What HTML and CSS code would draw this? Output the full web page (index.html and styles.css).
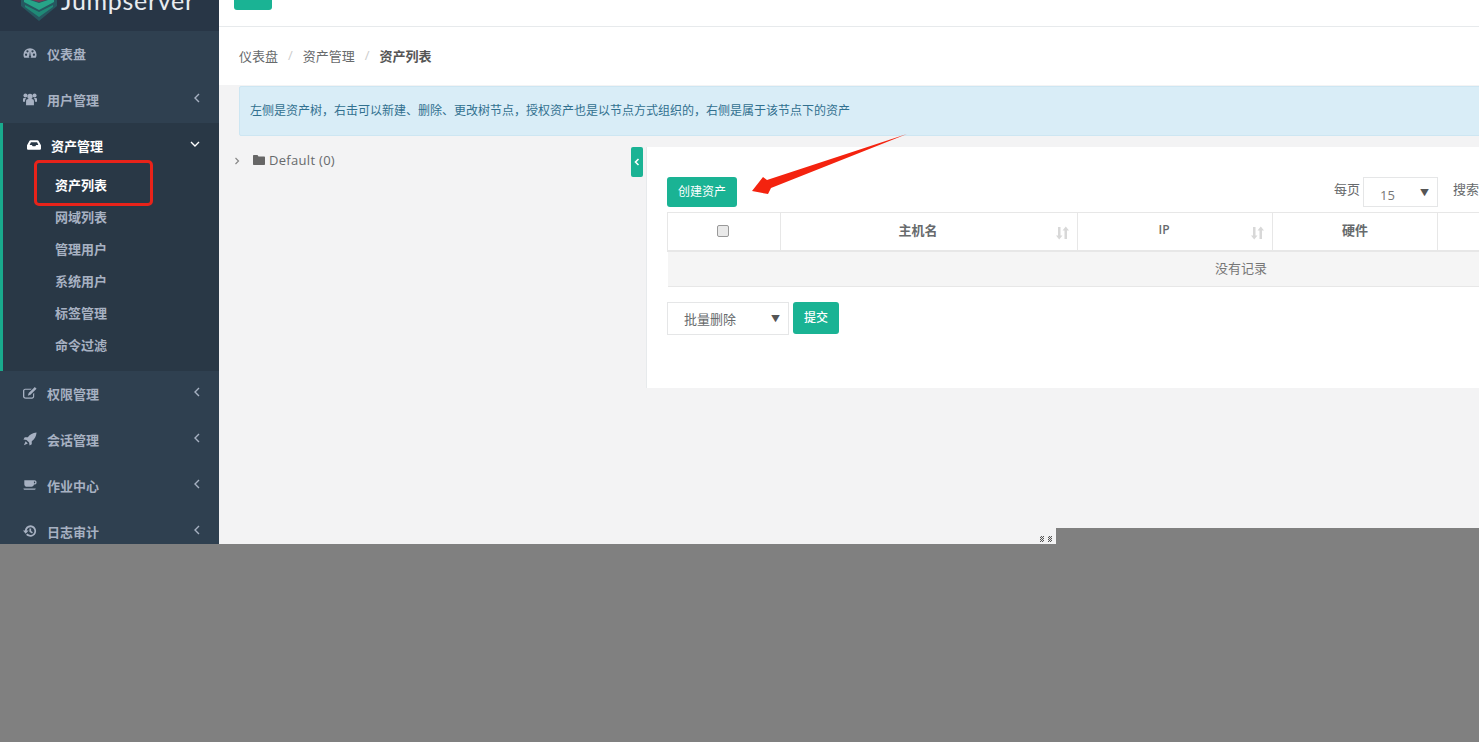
FILE: index.html
```html
<!DOCTYPE html>
<html lang="en">
<head>
    <meta charset="UTF-8">
    <title>资产列表</title>
    <link rel="stylesheet" href="styles.css">
</head>
<body>
    <div class="screen">
        <div class="page">
            <aside class="sidebar">
                <div class="logo">
                    <svg class="logo-mark" viewBox="0 0 38 40">
                        <path d="M19 0 L37 10 V25 L19 40 L1 25 V10 Z" fill="#265860"/>
                        <path d="M19 12 L30 18 L19 21 L8 18 Z" fill="#7a3a52"/>
                        <path d="M4 17 L19 22 L34 17 V21 L19 29 L4 21 Z" fill="#27a488"/>
                        <path d="M5 24 L19 31 L33 24 V26 L19 36 L5 26 Z" fill="#1f8a76"/>
                    </svg>
                    <span class="logo-text">Jumpserver</span>
                </div>
                <nav class="nav">
                    <a class="nav-item">
                        <svg class="nav-icon" viewBox="0 0 16 16"><path d="M8 2.500A7.500 7.500 0 0 0 .5 10c0 1.400.4 2.600 1 3.500h13c.6-.9 1-2.100 1-3.500A7.500 7.500 0 0 0 8 2.500Zm-4.500 8.800a1.300 1.300 0 1 1 0-2.600 1.300 1.300 0 0 1 0 2.600Zm1.600-3.900a1.300 1.300 0 1 1 0-2.600 1.300 1.300 0 0 1 0 2.600ZM8.900 11.500a1.300 1.300 0 1 1-1.800 0l.9-5.500Zm2-4.100a1.300 1.300 0 1 1 0-2.600 1.300 1.300 0 0 1 0 2.600Zm1.600 3.900a1.300 1.300 0 1 1 0-2.600 1.300 1.300 0 0 1 0 2.600Z" fill-rule="evenodd"/></svg>
                        <span>仪表盘</span>
                    </a>
                    <a class="nav-item">
                        <svg class="nav-icon" viewBox="0 0 16 16"><circle cx="8" cy="5" r="3"/><circle cx="2.800" cy="4" r="2.300"/><circle cx="13.200" cy="4" r="2.300"/><path d="M3.500 15V10.500C3.500 9 4.500 8 6 8h4c1.500 0 2.500 1 2.500 2.500V15ZM0 11V8.500C0 7.300.6 6.800 1.500 6.800h2.300c-.8.800-1.500 1.900-1.500 4.200ZM16 11V8.500C16 7.300 15.400 6.800 14.500 6.800h-2.300c.8.800 1.500 1.900 1.500 4.200Z"/></svg>
                        <span>用户管理</span>
                        <svg class="chevron" viewBox="0 0 8 10"><path d="M6 1 L2 5 L6 9"/></svg>
                    </a>
                    <div class="nav-group">
                        <a class="nav-item active">
                            <svg class="nav-icon" viewBox="0 0 16 16"><path d="M4 2.500h8c.5 0 .9.300 1.100.7L15.800 8c.1.300.2.500.2.800v3.200c0 .9-.7 1.500-1.500 1.500h-13C.7 13.500 0 12.900 0 12V8.800c0-.3.100-.5.200-.8L2.900 3.200c.2-.4.600-.7 1.100-.7ZM4.500 4.800 3 8h2.500l1 1.500h3l1-1.500H13l-1.500-3.200Z" fill-rule="evenodd"/></svg>
                            <span>资产管理</span>
                            <svg class="chevron" viewBox="0 0 10 8"><path d="M1 2 L5 6 L9 2"/></svg>
                        </a>
                        <a class="sub-item current">资产列表</a>
                        <a class="sub-item">网域列表</a>
                        <a class="sub-item">管理用户</a>
                        <a class="sub-item">系统用户</a>
                        <a class="sub-item">标签管理</a>
                        <a class="sub-item">命令过滤</a>
                    </div>
                    <a class="nav-item">
                        <svg class="nav-icon" viewBox="0 0 16 16"><path d="M2.500 3H10L8.700 4.300H2.700c-.7 0-1.200.5-1.200 1.200v6.300c0 .7.500 1.200 1.200 1.200h7.600c.7 0 1.200-.5 1.200-1.200V9l1.300-1.300v4.300c0 1.400-1.100 2.500-2.500 2.500h-7C1.100 14.500 0 13.400 0 12V5.500C0 4.100 1.100 3 2.500 3ZM13.500 1 15.500 3 8.500 10 5.500 11 6.500 8Z"/></svg>
                        <span>权限管理</span>
                        <svg class="chevron" viewBox="0 0 8 10"><path d="M6 1 L2 5 L6 9"/></svg>
                    </a>
                    <a class="nav-item">
                        <svg class="nav-icon" viewBox="0 0 16 16"><path d="M15.500 .5C11 1 8 2.500 5.500 6H2L.5 8.500 4 9 7 12l.5 3.500L10 14v-3.500C13.500 8 15 5 15.500 .5ZM3 10.500 1 15l4.500-2Z"/></svg>
                        <span>会话管理</span>
                        <svg class="chevron" viewBox="0 0 8 10"><path d="M6 1 L2 5 L6 9"/></svg>
                    </a>
                    <a class="nav-item">
                        <svg class="nav-icon" viewBox="0 0 16 16"><path d="M1.500 2.500h11.500c1.500 0 2.500 1 2.500 2.500S14.500 7.500 13 7.500h-.5c-.3 1.500-1.300 2.500-2.800 2.500H4.500C2.800 10 1.500 8.500 1.500 7ZM12.500 4v2h.5c.6 0 1-.4 1-1s-.4-1-1-1ZM.5 12h14c0 1-.8 1.500-1.700 1.500H2.200C1.300 13.500.5 13 .5 12Z" fill-rule="evenodd"/></svg>
                        <span>作业中心</span>
                        <svg class="chevron" viewBox="0 0 8 10"><path d="M6 1 L2 5 L6 9"/></svg>
                    </a>
                    <a class="nav-item">
                        <svg class="nav-icon" viewBox="0 0 16 16"><path d="M8.500 1.500a6.500 6.500 0 1 1-5 10.700l1.600-1.400a4.400 4.400 0 1 0-.9-3.300H6.500L3 11 0 7.500h2.100A6.500 6.500 0 0 1 8.500 1.500Z"/><path d="M7.300 5h2v3l2 1.300-1 1.500-3-1.900Z"/></svg>
                        <span>日志审计</span>
                        <svg class="chevron" viewBox="0 0 8 10"><path d="M6 1 L2 5 L6 9"/></svg>
                    </a>
                </nav>
            </aside>

            <main class="main">
                <div class="topbar"><span class="top-btn"></span></div>
                <div class="breadcrumb">
                    <span>仪表盘</span><i>/</i><span>资产管理</span><i>/</i><strong>资产列表</strong>
                </div>
                <div class="content">
                    <div class="alert">左侧是资产树，右击可以新建、删除、更改树节点，授权资产也是以节点方式组织的，右侧是属于该节点下的资产</div>
                    <div class="columns">
                        <div class="tree">
                            <svg class="tree-caret" viewBox="0 0 6 8"><path d="M1.500 1 L4.500 4 L1.500 7"/></svg>
                            <svg class="tree-folder" viewBox="0 0 12 10"><path d="M1 0h3.500l1 1.500H11c.6 0 1 .4 1 1V9c0 .6-.4 1-1 1H1c-.6 0-1-.4-1-1V1c0-.6.4-1 1-1Z"/></svg>
                            <span>Default (0)</span>
                        </div>
                        <div class="toggle">
                            <svg viewBox="0 0 6 8"><path d="M4.500 1 L1.500 4 L4.500 7"/></svg>
                        </div>
                        <section class="card">
                            <div class="toolbar">
                                <a class="btn btn-create">创建资产</a>
                                <div class="filters">
                                    <label>每页</label>
                                    <div class="page-size"><span>15</span><em>▼</em></div>
                                    <label class="search-label">搜索</label>
                                    <div class="search-box"></div>
                                </div>
                            </div>
                            <table class="grid">
                                <thead>
                                    <tr>
                                        <th class="col-check"><input type="checkbox" class="check"></th>
                                        <th class="col-host sortable">主机名
                                            <svg class="sort" viewBox="0 0 13 14"><path d="M2 1h2.500v8.500H6.500L3.200 13.500 0 9.500h2ZM9.800 .5 13 4.500h-2V13H8.500V4.500h-2Z"/></svg>
                                        </th>
                                        <th class="col-ip sortable">IP
                                            <svg class="sort" viewBox="0 0 13 14"><path d="M2 1h2.500v8.500H6.500L3.200 13.500 0 9.500h2ZM9.800 .5 13 4.500h-2V13H8.500V4.500h-2Z"/></svg>
                                        </th>
                                        <th class="col-hw">硬件</th>
                                        <th></th>
                                    </tr>
                                </thead>
                                <tbody>
                                    <tr><td colspan="5">没有记录</td></tr>
                                </tbody>
                            </table>
                            <div class="bulk">
                                <div class="bulk-select"><span>批量删除</span><em>▼</em></div>
                                <a class="btn btn-submit">提交</a>
                            </div>
                        </section>
                    </div>
                </div>
            </main>
        </div>

        <!-- screenshot leftovers and annotations -->
        <div class="gray-patch"></div>
        <div class="resize-dots"><span></span><span></span></div>
        <div class="mark-box"></div>
        <svg class="mark-arrow" viewBox="0 0 1479 742">
            <polygon points="907,134 767,180 763,177 752,191 768,194 771,188" fill="#f4230f"/>
        </svg>
    </div>
</body>
</html>
```

FILE: styles.css
```css
* {
    box-sizing: border-box;
}

html, body {
    margin: 0;
    height: 100%;
    overflow: hidden;
}

body {
    font-family: "Open Sans", "Noto Sans CJK SC", sans-serif;
    font-size: 13px;
    color: #676a6c;
}

.screen {
    position: relative;
    width: 1479px;
    height: 742px;
    background: #808080;
    overflow: hidden;
}

.page {
    display: flex;
    height: 544px;
    overflow: hidden;
}

/* sidebar */
.sidebar {
    flex: 0 0 219px;
    background: #2f4050;
    overflow: hidden;
}

.logo {
    display: flex;
    align-items: flex-end;
    height: 31px;
    padding: 0 0 10px 20px;
    background: #283646;
    overflow: hidden;
}

.logo-mark {
    flex: none;
    width: 38px;
    height: 40px;
}

.logo-text {
    flex: none;
    margin: 0 0 6px 3px;
    font-family: "Lato", sans-serif;
    font-size: 25px;
    line-height: 30px;
    letter-spacing: 0.7px;
    color: #e8ecf0;
}

.nav-item {
    display: flex;
    align-items: center;
    gap: 10px;
    height: 46px;
    padding: 0 18px 2px 23px;
    color: #a7b1c2;
    font-weight: 600;
}

.nav-icon {
    flex: none;
    width: 14px;
    height: 14px;
    fill: currentColor;
}

.chevron {
    width: 8px;
    height: 10px;
    margin: -3px 0 0 auto;
    fill: none;
    stroke: currentColor;
    stroke-width: 1.400;
}

.nav-group {
    padding-bottom: 10px;
    background: #293846;
    border-left: 3px solid #19aa8d;
}

.nav-item.active {
    padding-left: 24px;
    color: #fff;
}

.nav-item.active .chevron {
    width: 10px;
    height: 8px;
    margin-right: 1px;
}

.sub-item {
    display: block;
    height: 32px;
    padding-left: 52px;
    line-height: 32px;
    color: #a7b1c2;
    font-weight: 600;
}

.sub-item.current {
    color: #fff;
}

/* main column */
.main {
    flex: 1;
    min-width: 0;
    background: #f3f3f4;
    overflow: hidden;
}

.topbar {
    height: 27px;
    background: #fff;
    border-bottom: 1px solid #e7eaec;
    padding-left: 15px;
}

.top-btn {
    display: block;
    width: 38px;
    height: 10px;
    background: #1ab394;
    border-radius: 0 0 3px 3px;
}

.breadcrumb {
    display: flex;
    align-items: center;
    height: 58px;
    padding: 0 0 2px 20px;
    background: #fff;
}

.breadcrumb i {
    margin: 0 10px;
    font-style: normal;
    color: #ccc;
}

.breadcrumb strong {
    font-weight: 600;
    color: #555;
}

.content {
    width: 1640px;
    padding: 1px 0 0 20px;
}

.alert {
    height: 50px;
    padding-left: 10px;
    line-height: 47px;
    font-size: 12px;
    color: #31708f;
    background: #d9edf7;
    border: 1px solid #cde6f2;
    border-radius: 2px;
}

.columns {
    display: flex;
    margin-top: 11px;
}

.tree {
    flex: 0 0 398px;
    display: flex;
    align-items: center;
    align-self: flex-start;
    height: 26px;
    margin-left: -6px;
    letter-spacing: 0.3px;
}

.tree-caret {
    width: 6px;
    height: 8px;
    margin: 1px 0 0 1px;
    fill: none;
    stroke: #888;
    stroke-width: 1.200;
}

.tree-folder {
    width: 12px;
    height: 10px;
    margin: 0 4px 0 13px;
    fill: #666;
}

.toggle {
    flex: none;
    display: flex;
    align-items: center;
    justify-content: center;
    width: 12px;
    height: 30px;
    background: #1ab394;
    border-radius: 2px;
}

.toggle svg {
    width: 6px;
    height: 8px;
    fill: none;
    stroke: #fff;
    stroke-width: 1.600;
}

.card {
    flex: none;
    width: 1189px;
    height: 241px;
    margin-left: 3px;
    padding: 30px 20px 0;
    background: #fff;
    border-left: 1px solid #e7eaec;
}

.toolbar {
    display: flex;
    justify-content: space-between;
    height: 30px;
    margin-bottom: 5px;
}

.btn {
    display: flex;
    align-items: center;
    justify-content: center;
    padding-bottom: 2px;
    color: #fff;
    background: #1ab394;
    border-radius: 3px;
    font-size: 12px;
}

.btn-create {
    width: 70px;
    height: 30px;
}

.filters {
    display: flex;
    align-items: center;
}

.filters label {
    margin-right: 3px;
    padding-bottom: 8px;
}

.page-size {
    display: flex;
    align-items: center;
    justify-content: space-between;
    width: 75px;
    height: 30px;
    padding: 0 8px 0 16px;
    border: 1px solid #e5e6e7;
    color: #777;
}

.page-size span {
    padding-top: 5px;
}

.page-size em, .bulk-select em {
    font-style: normal;
    font-size: 9px;
    color: #555;
}

.filters .search-label {
    margin: 0 3px 0 15px;
}

.search-box {
    width: 333px;
    height: 30px;
    border: 1px solid #e5e6e7;
}

.grid {
    width: 1148px;
    table-layout: fixed;
    border-collapse: collapse;
}

.grid th {
    position: relative;
    height: 38px;
    padding: 0 0 3px;
    font-weight: 600;
    color: #676a6c;
    background: #fff;
    border: 1px solid #e7e7e7;
    border-bottom-width: 2px;
}

.grid th.sortable {
    padding-right: 22px;
}

.col-check {
    width: 113px;
}

.col-host {
    width: 297px;
}

.col-ip {
    width: 195px;
    font-size: 12px;
}

.col-hw {
    width: 165px;
}

.check {
    appearance: none;
    display: block;
    width: 12px;
    height: 12px;
    margin: 2px auto 0 49px;
    background: #e9e9e9;
    border: 1px solid #999;
    border-radius: 2px;
}

.sort {
    position: absolute;
    right: 8px;
    top: 13px;
    width: 13px;
    height: 14px;
    fill: #d8d8d8;
}

.grid td {
    height: 36px;
    padding: 0 0 2px;
    text-align: center;
    color: #777;
    background: #f5f5f5;
    border-bottom: 1px solid #e7e7e7;
}

.bulk {
    display: flex;
    gap: 4px;
    align-items: flex-start;
    margin-top: 15px;
}

.bulk-select {
    display: flex;
    align-items: center;
    justify-content: space-between;
    width: 122px;
    height: 33px;
    padding: 0 8px 0 16px;
    border: 1px solid #e5e6e7;
}

.btn-submit {
    width: 46px;
    height: 32px;
    font-weight: 500;
}

/* things lying on top of the page */
.gray-patch {
    position: absolute;
    left: 1056px;
    top: 528px;
    right: 0;
    height: 16px;
    background: #808080;
}

.resize-dots {
    position: absolute;
    left: 1040px;
    top: 536px;
    display: flex;
    gap: 4px;
}

.resize-dots span {
    width: 4px;
    height: 6px;
    background: repeating-conic-gradient(#555 0 25%, #e4e4e4 0 50%) 0 0 / 2px 2px;
}

.mark-box {
    position: absolute;
    left: 34px;
    top: 160px;
    width: 119px;
    height: 46px;
    border: 3px solid #e8231a;
    border-radius: 5px;
}

.mark-arrow {
    position: absolute;
    left: 0;
    top: 0;
    width: 1479px;
    height: 742px;
    pointer-events: none;
}
```
